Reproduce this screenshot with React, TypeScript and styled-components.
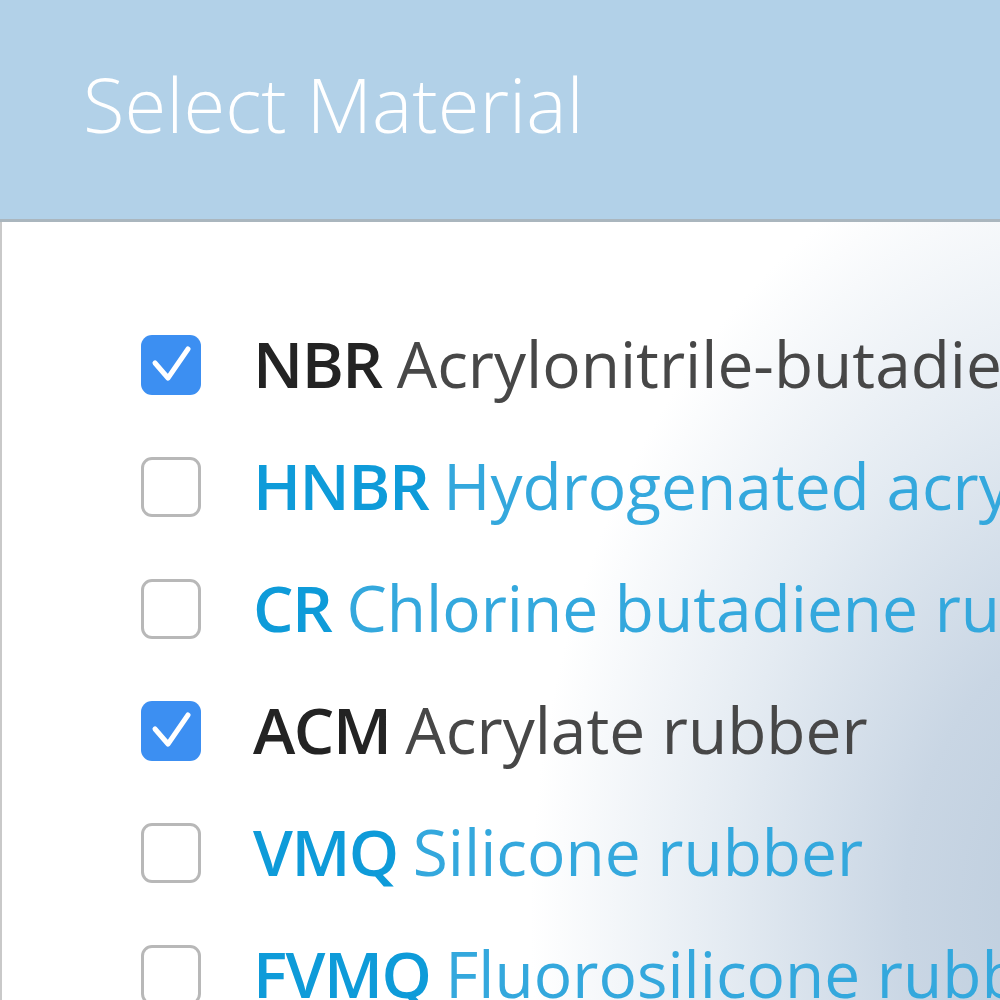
import styled, { createGlobalStyle } from "styled-components";

const GlobalStyle = createGlobalStyle`
  html, body {
    margin: 0;
    padding: 0;
    width: 1000px;
    height: 1000px;
    overflow: hidden;
    background: #ffffff;
  }
`

interface Material {
  code: string;
  name: string;
  checked: boolean;
}

const materials: Material[] = [
  { code: 'NBR', name: 'Acrylonitrile-butadiene rubber', checked: true },
  { code: 'HNBR', name: 'Hydrogenated acrylonitrile-butadiene rubber', checked: false },
  { code: 'CR', name: 'Chlorine butadiene rubber', checked: false },
  { code: 'ACM', name: 'Acrylate rubber', checked: true },
  { code: 'VMQ', name: 'Silicone rubber', checked: false },
  { code: 'FVMQ', name: 'Fluorosilicone rubber', checked: false },
]

const Page = styled.div`
  width: 1000px;
  height: 1000px;
  display: flex;
  flex-direction: column;
  overflow: hidden;
`

const Header = styled.header`
  height: 219px;
  flex: none;
  display: flex;
  align-items: center;
  padding-left: 83px;
  background: #b2d1e8;
  border-bottom: 3px solid #aab6be;
`

const Title = styled.h1`
  margin: 0 0 12px;
  font-family: "Open Sans", "DejaVu Sans", sans-serif;
  font-weight: 300;
  font-size: 76px;
  color: #ffffff;
`

const Panel = styled.section`
  flex: 1;
  border-left: 2px solid #c9c9c9;
  background: radial-gradient(ellipse 72% 120% at 112% 85%, #b9cadb 0%, #c9d6e4 30%, #e4ebf2 55%, #ffffff 82%);
  padding: 82px 0 0 139px;
  display: flex;
  flex-direction: column;
`

const Row = styled.label`
  height: 122px;
  display: flex;
  align-items: center;
  gap: 54px;
  white-space: nowrap;
  font-family: "Open Sans", "DejaVu Sans", sans-serif;
  font-size: 64px;
`

const Box = styled.span<{ $checked: boolean }>`
  width: 60px;
  height: 60px;
  flex: none;
  box-sizing: border-box;
  border-radius: 11px;
  display: flex;
  background: ${p => p.$checked ? '#3c8ff2' : '#ffffff'};
  border: ${p => p.$checked ? 'none' : '3px solid #b8b8b8'};
`

const Label = styled.span`
  margin-top: -4px;
  margin-left: -2px;
`

const Code = styled.b<{ $checked: boolean }>`
  font-weight: 600;
  letter-spacing: -1.5px;
  color: ${p => p.$checked ? '#232323' : '#0e9bd9'};
  margin-right: 15px;
`

const Name = styled.span<{ $checked: boolean }>`
  font-weight: 400;
  color: ${p => p.$checked ? '#474747' : '#34a8dd'};
`

function Check() {
  return (
    <svg width="60" height="60" viewBox="0 0 60 60">
      <path d="M14 28 L27 43 L47 14" fill="none" stroke="#ffffff" strokeWidth="5" strokeLinecap="round" strokeLinejoin="round" />
    </svg>
  )
}

function App() {
  return (
    <Page>
      <GlobalStyle />
      <Header>
        <Title>Select Material</Title>
      </Header>
      <Panel>
        {materials.map(m => (
          <Row key={m.code}>
            <Box $checked={m.checked}>{m.checked ? <Check /> : null}</Box>
            <Label>
              <Code $checked={m.checked}>{m.code}</Code>
              <Name $checked={m.checked}>{m.name}</Name>
            </Label>
          </Row>
        ))}
      </Panel>
    </Page>
  )
}

export default App
